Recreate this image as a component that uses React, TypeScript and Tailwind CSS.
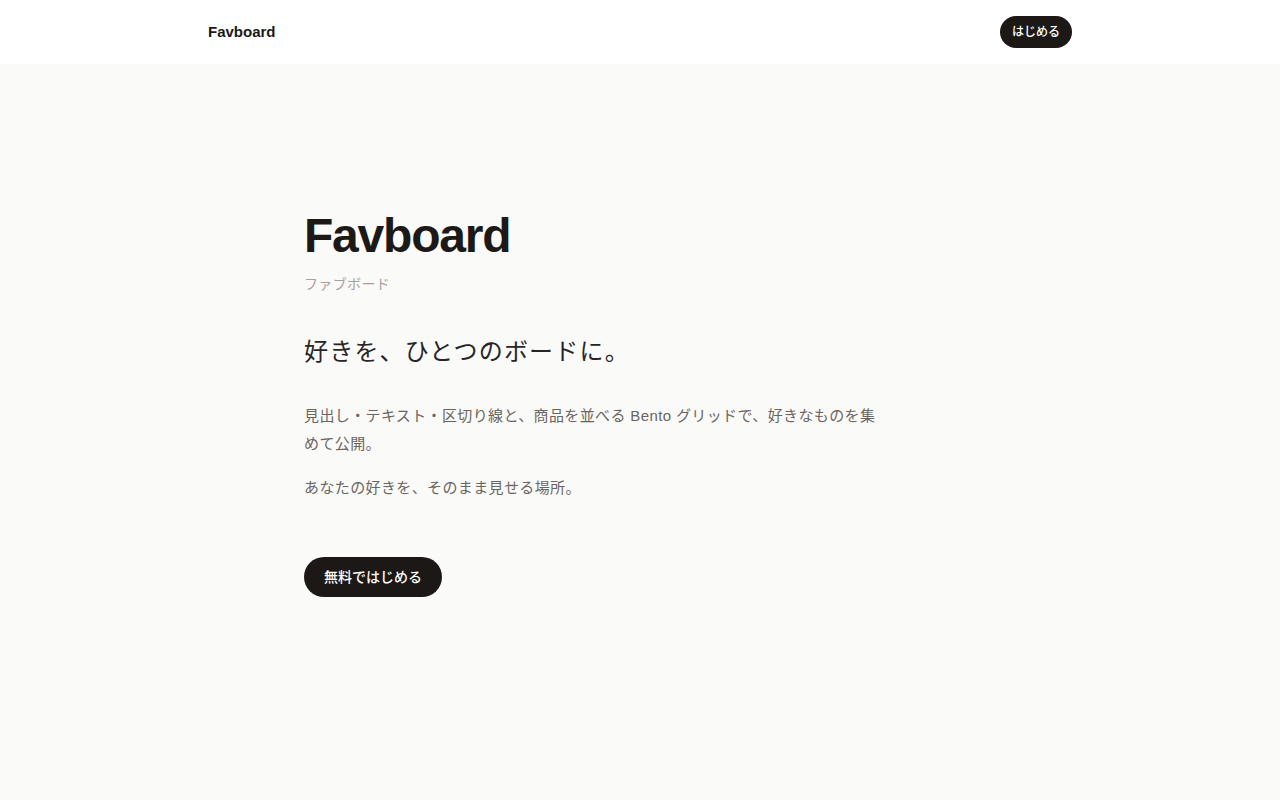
const sans = "font-['Liberation_Sans','Noto_Sans_CJK_JP',sans-serif]"

export default function App() {
  return (
    <div className={`min-h-screen bg-[#fafaf9] text-[#1c1917] ${sans}`}>
      {/* Header */}
      <header className="bg-white">
        <div className="mx-auto flex h-16 max-w-[864px] items-center justify-between">
          <a href="#" className="text-[15px] font-bold text-[#1c1917]">Favboard</a>
          <button className="h-8 rounded-full bg-[#1c1815] px-3 text-xs font-medium text-white">
            はじめる
          </button>
        </div>
      </header>

      {/* Hero */}
      <main className="mx-auto max-w-[672px] pt-[148px] pb-24">
        <h1 className="text-5xl leading-none font-bold tracking-tight text-[#1c1917]">Favboard</h1>
        <p className="mt-[14px] text-sm tracking-wide text-[#a8a29e]">ファブボード</p>

        <h2 className="mt-[42px] text-2xl leading-8 font-normal tracking-wider text-[#292524]">好きを、ひとつのボードに。</h2>

        <div className="mt-[34px] max-w-[576px] space-y-4 text-[15px] leading-7 tracking-wide text-[#6b6560]">
          <p>見出し・テキスト・区切り線と、商品を並べる Bento グリッドで、好きなものを集めて公開。</p>
          <p>あなたの好きを、そのまま見せる場所。</p>
        </div>

        <button className="mt-[55px] h-10 rounded-full bg-[#1c1815] px-5 text-sm font-medium text-white">
          無料ではじめる
        </button>
      </main>
    </div>
  )
}
